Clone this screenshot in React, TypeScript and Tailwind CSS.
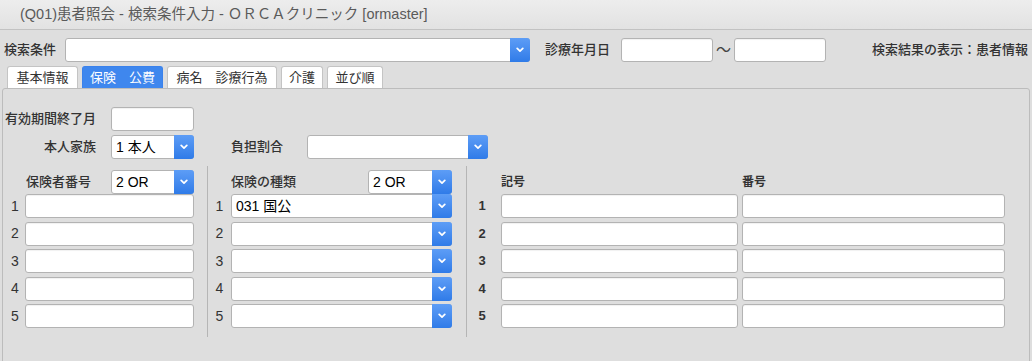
import React from 'react';

const font = { fontFamily: '"Liberation Sans", "Noto Sans CJK JP", sans-serif' };

const Chevron = () => (
  <svg width="8" height="6" viewBox="0 0 8 6">
    <path d="M1.2 1.4 L4 4.2 L6.8 1.4" stroke="white" strokeWidth="1.7" fill="none" strokeLinecap="round" strokeLinejoin="round" />
  </svg>
);

const Input = ({ className = '' }: { className?: string }) => (
  <div className={`h-6 rounded-[3px] border border-[#b3b3b3] bg-white shadow-[inset_0_1px_1px_rgba(0,0,0,0.06)] ${className}`} />
);

const Select = ({ value = '', className = '' }: { value?: string; className?: string }) => (
  <div className={`flex h-6 rounded-[3px] border border-[#b3b3b3] bg-white ${className}`}>
    <div className="flex-1 truncate pl-[4px] text-[14px] leading-[22px] text-black">{value}</div>
    <div className="-my-px -mr-px flex w-5 items-center justify-center rounded-r-[3px] bg-linear-to-b from-[#5d9df6] to-[#2f7be8]">
      <Chevron />
    </div>
  </div>
);

const Tab = ({ label, width, active = false }: { label: string; width: string; active?: boolean }) => (
  <div
    className={`flex h-[22px] items-center justify-center rounded-t-[3px] border border-b-0 text-[13px] ${width} ${
      active ? 'border-[#3b82ec] bg-[#3f87ee] text-white' : 'border-[#c4c4c4] bg-white text-[#333]'
    }`}
  >
    {label}
  </div>
);

const rows = [1, 2, 3, 4, 5];

export default function App() {
  return (
    <div className="h-[361px] w-[1032px] overflow-hidden bg-[#dedede] text-[#333]" style={font}>
      {/* Title bar */}
      <div className="flex h-[30px] items-center border-b border-[#c2c2c2] bg-linear-to-b from-[#ededed] to-[#e2e2e2] pl-5 text-[14.5px] text-[#5a5a5a]">
        (Q01)患者照会 - 検索条件入力 - ＯＲＣＡクリニック [ormaster]
      </div>

      {/* Search row */}
      <div className="mt-2 flex h-6 items-center px-1 text-[13px]">
        <div className="w-[61px] font-medium">検索条件</div>
        <Select className="w-[465px]" />
        <div className="ml-[15px] w-[76px] font-medium">診療年月日</div>
        <Input className="w-[92px]" />
        <div className="w-[21px] text-center text-[15px] text-[#444]">～</div>
        <Input className="w-[92px]" />
        <div className="ml-auto font-medium">検索結果の表示：患者情報</div>
      </div>

      {/* Tabs */}
      <div className="mt-[4px] flex gap-[4px] pl-[7px]">
        <Tab label="基本情報" width="w-[71px]" />
        <Tab label="保険　公費" width="w-[81px]" active />
        <Tab label="病名　診療行為" width="w-[110px]" />
        <Tab label="介護" width="w-[42px]" />
        <Tab label="並び順" width="w-[56px]" />
      </div>

      {/* Panel */}
      <div className="mx-[2px] h-[300px] rounded-t-[3px] border border-[#bcbcbc] bg-[#dedede] pl-[2px] pt-[18px] text-[13px]">
        <div className="flex h-6 items-center">
          <div className="w-[106px] font-medium">有効期間終了月</div>
          <Input className="w-[83px]" />
        </div>

        <div className="mt-[4px] flex h-6 items-center">
          <div className="w-[106px] pr-[15px] text-right font-medium">本人家族</div>
          <Select value="1 本人" className="w-[83px]" />
          <div className="ml-[37px] w-[76px] font-medium">負担割合</div>
          <Select className="w-[181px]" />
        </div>

        <div className="mt-[7px] flex items-start">
          {/* 保険者番号 */}
          <div className="w-[202px] pt-1">
            <div className="flex h-6 items-center">
              <div className="w-[106px] pl-[21px] font-medium">保険者番号</div>
              <Select value="2 OR" className="w-[83px]" />
            </div>
            <div className="flex flex-col gap-[3.5px]">
              {rows.map((n) => (
                <div key={n} className="flex h-6 items-center">
                  <div className="w-5 text-center text-[14px]">{n}</div>
                  <Input className="w-[169px]" />
                </div>
              ))}
            </div>
          </div>

          <div className="h-[171px] w-px bg-[#b5b5b5]" />

          {/* 保険の種類 */}
          <div className="w-[258px] pt-1">
            <div className="flex h-6 items-center">
              <div className="w-[160px] pl-[23px] font-medium">保険の種類</div>
              <Select value="2 OR" className="w-[84px]" />
            </div>
            <div className="flex flex-col gap-[3.5px]">
              {rows.map((n) => (
                <div key={n} className="flex h-6 items-center">
                  <div className="w-[23px] text-center text-[14px]">{n}</div>
                  <Select value={n === 1 ? '031 国公' : ''} className="w-[221px]" />
                </div>
              ))}
            </div>
          </div>

          <div className="h-[171px] w-px bg-[#b5b5b5]" />

          {/* 記号・番号 */}
          <div className="pt-1">
            <div className="flex h-6 items-center text-[12px] font-bold">
              <div className="ml-[34px] w-[241px]">記号</div>
              <div>番号</div>
            </div>
            <div className="flex flex-col gap-[3.5px]">
              {rows.map((n) => (
                <div key={n} className="flex h-6 items-center gap-[4px]">
                  <div className="w-[30px] text-center font-bold">{n}</div>
                  <Input className="w-[237px]" />
                  <Input className="w-[263px]" />
                </div>
              ))}
            </div>
          </div>
        </div>
      </div>
    </div>
  );
}
